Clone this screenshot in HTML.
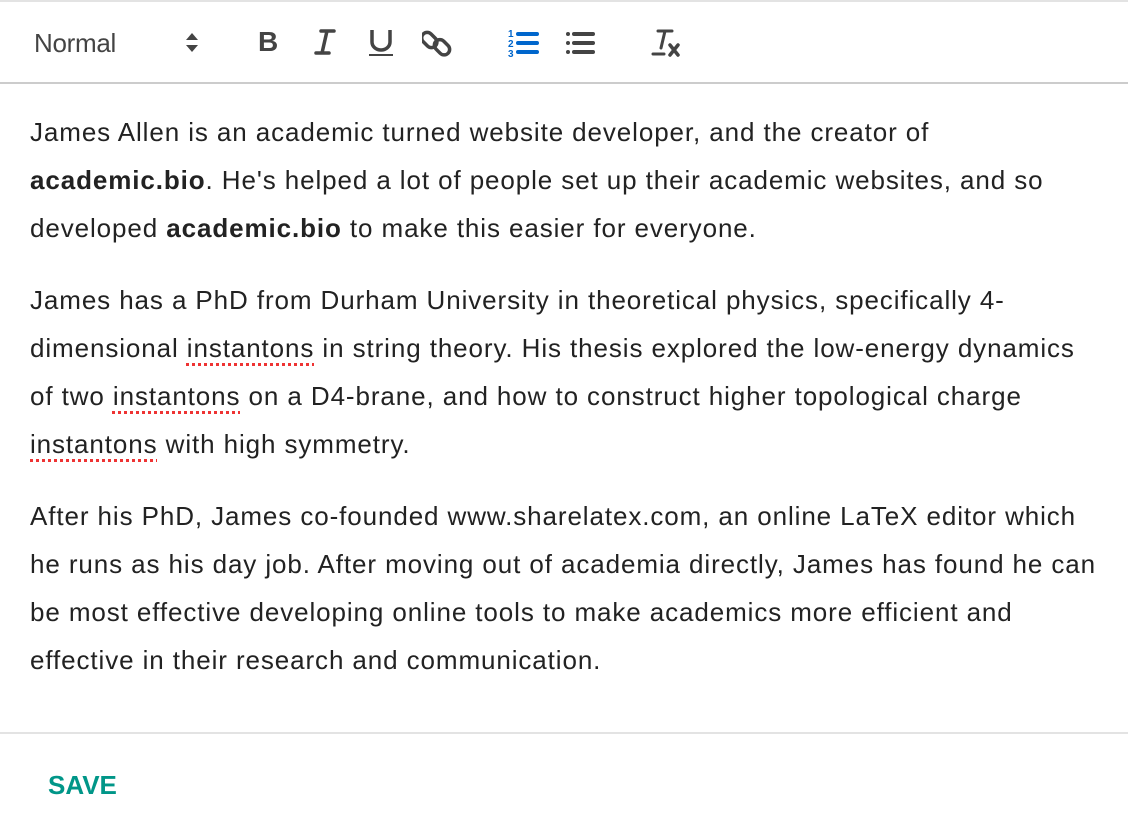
<!DOCTYPE html>
<html><head><meta charset="utf-8"><style>
body{margin:0;width:1128px;height:838px;background:#fff;font-family:"Liberation Sans",Arial,sans-serif;overflow:hidden;position:relative}
.top{position:absolute;left:0;top:0;width:1128px;height:2px;background:#e3e3e3}
.tb{position:absolute;left:0;top:2px;width:1128px;height:80px;border-bottom:2px solid #ccc}
.tb > *{position:absolute}
.ed{position:absolute;left:30px;top:108px;width:1100px;font-size:26px;line-height:48px;color:#222;letter-spacing:0.9px;white-space:nowrap}
.ed p{margin:0 0 24px 0}
.sp{text-decoration:underline dotted #e33;text-decoration-thickness:3px;text-underline-offset:6px}
.ft{position:absolute;left:0;top:732px;width:1128px;height:2px;background:#e3e3e3}
.save{position:absolute;left:48px;top:770px;font-size:26px;font-weight:bold;color:#009688;letter-spacing:0}
</style></head><body>
<div class="top"></div>
<div class="tb">
<div style="left:34px;top:26px;font-size:26px;color:#444;letter-spacing:-0.3px">Normal</div>
<svg style="left:184px;top:30px" width="16" height="22"><path d="M2 8 L8 1 L14 8Z M2 13 L8 20 L14 13Z" fill="#444"/></svg>
<div style="left:258px;top:24px;font-size:28px;color:#444;font-weight:bold">B</div>
<svg style="left:312px;top:27px" width="26" height="28"><path d="M9 2H22M4 24H17M15 2L10 24" stroke="#444" stroke-width="3.5" stroke-linecap="round" fill="none"/></svg>
<svg style="left:368px;top:26px" width="26" height="30"><path d="M4 2V14A9 8 0 0 0 22 14V2" stroke="#444" stroke-width="3.5" fill="none"/><path d="M1 27H25" stroke="#444" stroke-width="2"/></svg>
<svg style="left:422px;top:26px" width="32" height="32"><g fill="none" stroke="#444" stroke-width="3.5"><rect x="2" y="3" width="11" height="17" rx="5.5" transform="rotate(-45 8 12)"/><rect x="15" y="11" width="11" height="17" rx="5.5" transform="rotate(-45 20 20)"/></g></svg>
<svg style="left:508px;top:26px" width="32" height="30"><g fill="#0066cc" font-size="10" font-weight="bold" font-family="Liberation Sans"><text x="0" y="9">1</text><text x="0" y="19">2</text><text x="0" y="29">3</text></g><path d="M10 6H29M10 15H29M10 24H29" stroke="#0066cc" stroke-width="4" stroke-linecap="round"/></svg>
<svg style="left:564px;top:26px" width="32" height="30"><g fill="#444"><circle cx="4" cy="6" r="2"/><circle cx="4" cy="15" r="2"/><circle cx="4" cy="24" r="2"/></g><path d="M10 6H29M10 15H29M10 24H29" stroke="#444" stroke-width="4" stroke-linecap="round"/></svg>
<svg style="left:650px;top:26px" width="34" height="30"><path d="M8 3H22M15 3L11 20M3 26H14" stroke="#444" stroke-width="3" stroke-linecap="round" fill="none"/><path d="M20 17L28 27M28 17L20 27" stroke="#444" stroke-width="3.5" stroke-linecap="round"/></svg>
</div>
<div class="ed">
<p>James Allen is an academic turned website developer, and the creator of<br><b>academic.bio</b>. He's helped a lot of people set up their academic websites, and so<br>developed <b>academic.bio</b> to make this easier for everyone.</p>
<p>James has a PhD from Durham University in theoretical physics, specifically 4-<br>dimensional <span class="sp">instantons</span> in string theory. His thesis explored the low-energy dynamics<br>of two <span class="sp">instantons</span> on a D4-brane, and how to construct higher topological charge<br><span class="sp">instantons</span> with high symmetry.</p>
<p>After his PhD, James co-founded www.sharelatex.com, an online LaTeX editor which<br>he runs as his day job. After moving out of academia directly, James has found he can<br>be most effective developing online tools to make academics more efficient and<br>effective in their research and communication.</p>
</div>
<div class="ft"></div>
<div class="save">SAVE</div>
</body></html>
